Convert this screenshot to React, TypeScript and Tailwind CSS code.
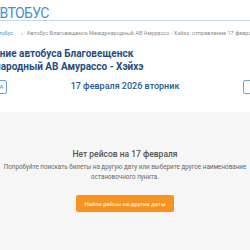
import React from 'react';

const App: React.FC = () => {
  return (
    <div className="w-[250px] h-[250px] overflow-hidden bg-white font-['Roboto',sans-serif]">
      <div className="flex justify-center">
        <div className="w-[356px] shrink-0">
          <header className="h-[21px] border-b border-[#c7d7e8] pl-[44px] pt-[1px]">
            <span className="text-[14px] leading-[17px] text-[#3f8fd6] tracking-[-0.6px]">АВТОБУС</span>
          </header>

          <nav className="h-[24px] flex items-center pl-[12px] text-[5.6px] text-[#8a8a8a] whitespace-nowrap">
            <span className="text-[#3f8fd6]">Главная</span>
            <span className="mx-[5px]">›</span>
            <span className="text-[#3f8fd6]">Автобус</span>
            <span className="ml-[8px] mr-[4px]">›</span>
            <span>Автобус Благовещенск Международный АВ Амурассо - Хэйхэ: отправление 17 февраля 2026</span>
          </nav>

          <div className="px-[14px] pt-[2px]">
            <h1 className="text-[10px] leading-[13px] font-bold text-[#1f4d7e] w-[190px]">
              Расписание автобуса Благовещенск Международный АВ Амурассо - Хэйхэ
            </h1>
          </div>

          <div className="mt-[7px] h-[14px] flex items-center justify-between">
            <button className="w-[60px] h-[14px] border border-[#6fa3d8] rounded-[2px] text-[5px] text-[#3f8fd6] text-right pr-[2px]">
              ← Пред.
            </button>
            <div className="text-[9px] font-medium text-[#2b5a8e]">17 февраля 2026 вторник</div>
            <button className="w-[60px] h-[14px] border border-[#6fa3d8] rounded-[2px] text-[5px] text-[#3f8fd6] text-left pl-[8px]">
              След. →
            </button>
          </div>
        </div>
      </div>

      <section className="mt-[18px] h-[200px] bg-[#f6f6f6] flex flex-col items-center pt-[36px]">
        <h2 className="text-[8.5px] leading-[12px] font-medium text-[#555]">Нет рейсов на 17 февраля</h2>
        <p className="mt-[2px] w-[250px] text-center text-[6.3px] leading-[10px] text-[#666]">
          Попробуйте поискать билеты на другую дату или выберите другое наименование остановочного пункта.
        </p>
        <button className="mt-[13px] w-[98px] h-[17px] bg-[#f7931e] rounded-[2px] text-[6px] text-white">
          Найти рейсы на другие даты
        </button>
      </section>
    </div>
  );
};

export default App;
